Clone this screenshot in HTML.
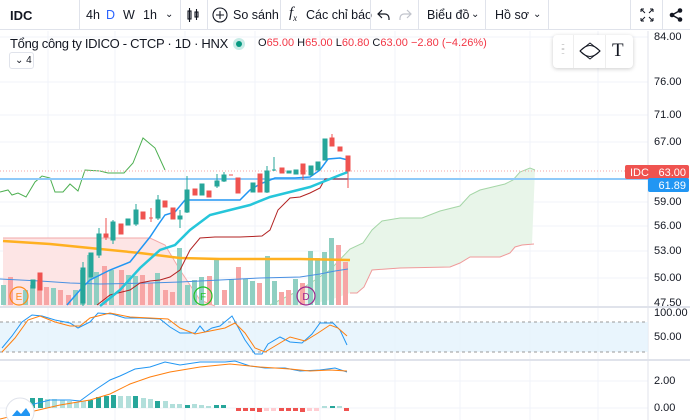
<!DOCTYPE html>
<html><head><meta charset="utf-8"><style>
*{margin:0;padding:0;box-sizing:border-box}
body{width:690px;height:420px;overflow:hidden;background:#fff;font-family:"Liberation Sans","Noto Sans CJK SC",sans-serif;color:#131722;position:relative}
.tb{position:absolute;left:0;top:0;width:690px;height:30px;border-bottom:1px solid #e0e3eb;font-size:12.5px}
.tb span{position:absolute;top:8px;white-space:nowrap}
.sep{position:absolute;top:0;width:1px;height:30px;background:#e0e3eb}
.ax{position:absolute;left:654px;font-size:11px;color:#131722}
</style></head><body>
<div class="tb">
<span style="left:10px;font-weight:bold;font-size:13px">IDC</span>
<div class="sep" style="left:79px"></div>
<span style="left:86px">4h</span><span style="left:106px;color:#2962ff">D</span><span style="left:123px">W</span><span style="left:143px">1h</span><span style="left:165px;font-size:10px;top:9px">⌄</span>
<div class="sep" style="left:180px"></div>
<svg style="position:absolute;left:185px;top:7px" width="16" height="16" viewBox="0 0 16 16" fill="none" stroke="#131722" stroke-width="1.1"><rect x="3" y="4" width="3" height="8"/><line x1="4.5" y1="1" x2="4.5" y2="15"/><rect x="10" y="5" width="3" height="5"/><line x1="11.5" y1="2" x2="11.5" y2="13"/></svg>
<div class="sep" style="left:207px"></div>
<svg style="position:absolute;left:212px;top:7px" width="16" height="16" viewBox="0 0 16 16" fill="none" stroke="#131722" stroke-width="1.1"><circle cx="8" cy="8" r="7"/><path d="M8 4v8M4 8h8"/></svg>
<span style="left:233px">So sánh</span>
<div class="sep" style="left:280px"></div>
<span style="left:289px;font-family:'Liberation Serif',serif;font-style:italic;font-size:15px;top:5px">f<sub style="font-size:9px">x</sub></span>
<span style="left:306px">Các chỉ báo</span>
<div class="sep" style="left:370px"></div>
<svg style="position:absolute;left:377px;top:9px" width="14" height="12" viewBox="0 0 14 12" fill="none" stroke="#131722" stroke-width="1.2"><path d="M5 1L1 5l4 4M1 5h7a4 4 0 0 1 4 4v2"/></svg>
<svg style="position:absolute;left:398px;top:9px" width="14" height="12" viewBox="0 0 14 12" fill="none" stroke="#c0c3cc" stroke-width="1.2"><path d="M9 1l4 4-4 4M13 5H6a4 4 0 0 0-4 4v2"/></svg>
<div class="sep" style="left:418px"></div>
<span style="left:427px">Biểu đồ</span><span style="left:471px;font-size:10px;top:9px">⌄</span>
<div class="sep" style="left:485px"></div>
<span style="left:495px">Hồ sơ</span><span style="left:533px;font-size:10px;top:9px">⌄</span>
<div class="sep" style="left:548px"></div>
<div class="sep" style="left:630px"></div>
<svg style="position:absolute;left:640px;top:8px" width="14" height="14" viewBox="0 0 14 14" fill="none" stroke="#131722" stroke-width="1"><path d="M1 1l4 4M1 1h3M1 1v3M13 1l-4 4M13 1h-3M13 1v3M1 13l4-4M1 13h3M1 13v-3M13 13l-4-4M13 13h-3M13 13v-3"/></svg>
<div class="sep" style="left:662px"></div>
<svg style="position:absolute;left:669px;top:8px" width="14" height="14" viewBox="0 0 14 14" fill="#131722"><circle cx="11" cy="2.5" r="2.3"/><circle cx="3" cy="7" r="2.3"/><circle cx="11" cy="11.5" r="2.3"/><path d="M3 7L11 2.5M3 7l8 4.5" stroke="#131722" stroke-width="1.4"/></svg>
</div>

<svg style="position:absolute;left:0;top:31px" width="690" height="389" viewBox="0 31 690 389">
<g stroke="#f0f3fa" stroke-width="1">
<path d="M48 31V420M115 31V420M185 31V420M255 31V420M320 31V420M395 31V420M460 31V420M530 31V420M598 31V420"/>
<path d="M0 82H648M0 115H648M0 142H648M0 202H648M0 226H648M0 251H648M0 278H648M0 37H648M0 381H648M0 408H648"/>
</g>
<line x1="648" y1="31" x2="648" y2="420" stroke="#e0e3eb"/>
<line x1="0" y1="307" x2="690" y2="307" stroke="#e0e3eb" stroke-width="2"/>
<line x1="0" y1="360" x2="690" y2="360" stroke="#e0e3eb" stroke-width="2"/>
<path d="M3 238L150 238L165 245L180 270L200 300L215 306L3 306Z" fill="#fde5e5"/>
<path d="M3 238L150 238L165 245L180 270L200 300L215 306" fill="none" stroke="#f2a8a8"/>
<path d="M270 305L300 290L330 270L350 249L363 243L372 230L382 221L400 218L422 218L440 211L460 206L470 195L480 190L505 184L513 180L520 172L530 168L535 170L532 244L522 245L515 247L510 253L500 257L470 257L460 263L450 267L400 268L372 270L364 287L357 293L350 293L330 300L300 306Z" fill="#e8f5e9"/>
<path d="M270 305L300 290L330 270L350 249L363 243L372 230L382 221L400 218L422 218L440 211L460 206L470 195L480 190L505 184L513 180L520 172L530 168L535 170" fill="none" stroke="#a5d6a7"/>
<path d="M350 293L357 293L364 287L372 270L400 268L450 267L460 263L470 257L500 257L510 253L515 247L522 245L534 244" fill="none" stroke="#ef9a9a"/>
<g fill="#f7a5a5">
<rect x="8" y="277" width="5" height="28"/><rect x="37" y="280" width="5" height="25"/><rect x="44" y="287" width="5" height="18"/><rect x="58" y="290" width="5" height="15"/><rect x="66" y="295" width="5" height="10"/><rect x="102" y="266" width="5" height="39"/><rect x="119" y="270" width="5" height="35"/><rect x="140" y="275" width="5" height="30"/><rect x="148" y="283" width="5" height="22"/><rect x="163" y="290" width="5" height="15"/><rect x="170" y="292" width="5" height="13"/><rect x="207" y="276" width="5" height="29"/><rect x="222" y="290" width="5" height="15"/><rect x="236" y="267" width="5" height="38"/><rect x="257" y="283" width="5" height="22"/><rect x="279" y="292" width="5" height="13"/><rect x="286" y="290" width="5" height="15"/><rect x="300" y="283" width="5" height="22"/><rect x="336" y="245" width="5" height="60"/><rect x="343" y="262" width="5" height="43"/></g>
<g fill="#8fcfc2">
<rect x="1" y="285" width="5" height="20"/><rect x="23" y="290" width="5" height="15"/><rect x="30" y="285" width="5" height="20"/><rect x="51" y="288" width="5" height="17"/><rect x="73" y="290" width="5" height="15"/><rect x="80" y="270" width="5" height="35"/><rect x="87" y="255" width="5" height="50"/><rect x="94" y="272" width="5" height="33"/><rect x="109" y="270" width="5" height="35"/><rect x="126" y="275" width="5" height="30"/><rect x="133" y="276" width="5" height="29"/><rect x="155" y="273" width="5" height="32"/><rect x="177" y="248" width="5" height="57"/><rect x="185" y="285" width="5" height="20"/><rect x="192" y="280" width="5" height="25"/><rect x="199" y="277" width="5" height="28"/><rect x="214" y="258" width="5" height="47"/><rect x="229" y="279" width="5" height="26"/><rect x="243" y="279" width="5" height="26"/><rect x="250" y="281" width="5" height="24"/><rect x="265" y="256" width="5" height="49"/><rect x="272" y="281" width="5" height="24"/><rect x="293" y="279" width="5" height="26"/><rect x="308" y="251" width="5" height="54"/><rect x="315" y="258" width="5" height="47"/><rect x="322" y="252" width="5" height="53"/><rect x="329" y="238" width="5" height="67"/></g>
<path d="M0 279L40 281L70 283L100 284L150 283L180 282L220 280L260 278L300 277L320 274L335 271L348 269" fill="none" stroke="#4a90e2" stroke-width="1"/>
<path d="M3 241L50 244L100 249L140 253L180 258L220 259L300 259L350 260" fill="none" stroke="#ffb020" stroke-width="2.5"/>
<path d="M0 192L8 190L12 195L18 193L26 197L35 182L42 176L50 178L55 192L63 192L70 184L78 191L85 170L100 171L108 173L124 173L133 163L143 138L155 148L165 170" fill="none" stroke="#4caf50" stroke-width="1"/>
<line x1="0" y1="171" x2="648" y2="171" stroke="#f7a5a5" stroke-dasharray="1,2"/>
<line x1="0" y1="179" x2="648" y2="179" stroke="#90caf9" stroke-width="2"/>
<path d="M97 305L110 295L130 290L140 283L150 281L160 280L170 277L180 270L190 250L200 238L215 237L240 237L262 236L270 230L278 210L290 198L300 197L310 193L320 188L325 179L348 179" fill="none" stroke="#b22222" stroke-width="1"/>
<path d="M100 306L120 290L140 268L160 250L175 245L190 230L210 215L230 210L250 205L270 197L290 192L310 187L325 181L340 175L348 172" fill="none" stroke="#26c6da" stroke-width="2.5"/>
<path d="M67 305L80 290L90 280L100 275L110 270L130 262L150 237L158 225L165 215L175 212L185 200L220 200L240 200L250 190L260 184L275 178L295 178L310 177L320 170L328 159L340 158L348 160" fill="none" stroke="#2196f3" stroke-width="1.5"/>
<g stroke="#26a69a" fill="#26a69a">
<rect x="31" y="280" width="4" height="8"/><rect x="81" y="268" width="4" height="35"/><line x1="83" y1="262" x2="83" y2="306"/><rect x="89" y="253" width="4" height="24"/><rect x="97" y="234" width="4" height="21"/><line x1="99" y1="228" x2="99" y2="258"/><rect x="111" y="222" width="4" height="18"/><line x1="113" y1="220" x2="113" y2="244"/><rect x="126" y="219" width="4" height="6"/><rect x="134" y="210" width="4" height="14"/><line x1="136" y1="204" x2="136" y2="226"/><rect x="156" y="200" width="4" height="18"/><line x1="158" y1="195" x2="158" y2="220"/><rect x="178" y="216" width="4" height="3"/><line x1="180" y1="210" x2="180" y2="228"/><rect x="185" y="190" width="4" height="22"/><line x1="187" y1="176" x2="187" y2="213"/><rect x="200" y="184" width="4" height="11"/><rect x="215" y="181" width="4" height="5"/><line x1="217" y1="174" x2="217" y2="188"/><rect x="222" y="175" width="4" height="6"/><line x1="224" y1="172" x2="224" y2="182"/><rect x="251" y="183" width="4" height="9"/><rect x="265" y="171" width="4" height="21"/><line x1="267" y1="166" x2="267" y2="193"/><line x1="272" y1="170" x2="276" y2="170"/><line x1="274" y1="157" x2="274" y2="171"/><rect x="287" y="171" width="4" height="2"/><rect x="294" y="170" width="4" height="4"/><rect x="309" y="166" width="4" height="9"/><rect x="316" y="162" width="4" height="8"/><rect x="323" y="139" width="4" height="21"/></g>
<g stroke="#ef5350" fill="#ef5350">
<rect x="38" y="273" width="4" height="17"/><rect x="104" y="234" width="4" height="3"/><line x1="106" y1="218" x2="106" y2="240"/><rect x="119" y="224" width="4" height="10"/><rect x="141" y="212" width="4" height="7"/><line x1="149" y1="218" x2="153" y2="218"/><line x1="151" y1="208" x2="151" y2="222"/><rect x="163" y="201" width="4" height="6"/><rect x="171" y="208" width="4" height="11"/><rect x="193" y="189" width="4" height="6"/><rect x="207" y="191" width="4" height="6"/><line x1="229" y1="175" x2="233" y2="175"/><rect x="236" y="178" width="4" height="15"/><rect x="258" y="174" width="4" height="18"/><rect x="280" y="168" width="4" height="5"/><rect x="301" y="164" width="4" height="10"/><line x1="303" y1="164" x2="303" y2="180"/><rect x="330" y="138" width="4" height="8"/><line x1="332" y1="134" x2="332" y2="146"/><rect x="338" y="147" width="4" height="4"/><rect x="346" y="156" width="4" height="15"/><line x1="348" y1="156" x2="348" y2="188"/></g>
<circle cx="19" cy="296" r="9" fill="none" stroke="#ff8c1a" stroke-width="1.2"/><text x="19" y="300" font-size="10" fill="#ff8c1a" text-anchor="middle">E</text>
<circle cx="203" cy="296" r="9" fill="none" stroke="#22c322" stroke-width="1.2"/><text x="203" y="300" font-size="10" fill="#22c322" text-anchor="middle">F</text>
<circle cx="306" cy="296" r="9" fill="none" stroke="#9c278f" stroke-width="1.2"/><text x="306" y="300" font-size="10" fill="#9c278f" text-anchor="middle">D</text>
<rect x="0" y="322" width="648" height="30" fill="#e3f2fd" opacity="0.8"/>
<path d="M0 322H648M0 352H648" stroke="#999" stroke-dasharray="3,3"/>
<path d="M2 348L12 336L22 322L32 315L42 316L55 320L70 323L78 328L90 322L98 313L112 314L125 318L140 318L160 319L170 327L180 333L195 333L200 326L205 332L212 328L220 326L232 316L245 340L255 354L262 354L268 344L280 337L290 342L302 343L312 334L320 323L333 323L340 330L347 345" fill="none" stroke="#2196f3" stroke-width="1"/>
<path d="M2 352L15 338L28 320L40 316L55 322L70 326L80 326L90 318L110 313L130 317L150 318L168 319L180 328L195 334L210 331L225 328L235 323L245 333L255 348L265 352L275 346L290 337L305 341L318 333L330 325L338 328L347 336" fill="none" stroke="#ff7f0e" stroke-width="1"/>
<g fill="#26a69a"><rect x="30" y="398" width="5" height="10"/><rect x="38" y="398" width="5" height="10"/><rect x="88" y="400" width="5" height="8"/><rect x="96" y="397" width="5" height="11"/><rect x="104" y="396" width="5" height="12"/><rect x="111" y="395" width="5" height="13"/><rect x="133" y="396" width="5" height="12"/><rect x="155" y="401" width="5" height="7"/><rect x="185" y="405" width="5" height="3"/><rect x="214" y="405" width="5" height="3"/><rect x="221" y="405" width="5" height="3"/><rect x="330" y="406" width="5" height="2"/></g>
<g fill="#b2dfdb"><rect x="45" y="399" width="5" height="9"/><rect x="52" y="399" width="5" height="9"/><rect x="60" y="400" width="5" height="8"/><rect x="67" y="401" width="5" height="7"/><rect x="74" y="402" width="5" height="6"/><rect x="81" y="401" width="5" height="7"/><rect x="118" y="396" width="5" height="12"/><rect x="126" y="396" width="5" height="12"/><rect x="141" y="398" width="5" height="10"/><rect x="148" y="399" width="5" height="9"/><rect x="163" y="401" width="5" height="7"/><rect x="170" y="404" width="5" height="4"/><rect x="177" y="404" width="5" height="4"/><rect x="192" y="404" width="5" height="4"/><rect x="199" y="405" width="5" height="3"/><rect x="206" y="406" width="5" height="2"/><rect x="322" y="406" width="5" height="2"/><rect x="337" y="406" width="5" height="2"/></g>
<g fill="#ef5350"><rect x="236" y="408" width="5" height="3"/><rect x="243" y="408" width="5" height="3"/><rect x="250" y="408" width="5" height="3"/><rect x="257" y="408" width="5" height="4"/><rect x="279" y="408" width="5" height="3"/><rect x="286" y="408" width="5" height="3"/><rect x="293" y="408" width="5" height="3"/><rect x="300" y="408" width="5" height="4"/><rect x="344" y="408" width="5" height="3"/></g>
<g fill="#ffcdd2"><rect x="264" y="408" width="5" height="3"/><rect x="271" y="408" width="5" height="3"/><rect x="307" y="408" width="5" height="3"/><rect x="314" y="408" width="5" height="3"/></g>
<path d="M30 405L50 400L70 400L80 401L95 390L110 380L120 376L135 369L150 367L165 362L180 365L200 362L225 362L235 361L250 366L265 368L285 368L300 371L320 370L335 368L347 372" fill="none" stroke="#2196f3" stroke-width="1"/>
<path d="M0 419L30 412L60 405L90 400L110 394L130 384L150 377L170 372L200 367L230 364L260 367L290 369L310 371L330 370L347 371" fill="none" stroke="#ff7f0e" stroke-width="1"/>
<rect x="625" y="165" width="64" height="14" rx="2" fill="#ef5350"/><text x="630" y="176" font-size="11" fill="#fff">IDC</text><text x="686" y="176" font-size="11" fill="#fff" text-anchor="end">63.00</text>
<rect x="648" y="178" width="41" height="14" rx="2" fill="#2196f3"/><text x="686" y="189" font-size="11" fill="#fff" text-anchor="end">61.89</text>
<circle cx="20" cy="412" r="14" fill="#fff" stroke="#e0e3eb"/><path d="M12 416l5-6 4 4 5-6 4 6v2h-18z" fill="#2196f3"/>
</svg>
<div class="ax" style="top:31px">84.00</div><div class="ax" style="top:76px">76.00</div><div class="ax" style="top:109px">71.00</div><div class="ax" style="top:136px">67.00</div><div class="ax" style="top:196px">59.00</div><div class="ax" style="top:220px">56.00</div><div class="ax" style="top:245px">53.00</div><div class="ax" style="top:272px">50.00</div><div class="ax" style="top:297px">47.50</div><div class="ax" style="top:307px">100.00</div><div class="ax" style="top:331px">50.00</div><div class="ax" style="top:375px">2.00</div><div class="ax" style="top:402px">0.00</div>

<div style="position:absolute;left:10px;top:36px;font-size:13px;letter-spacing:-0.3px;white-space:nowrap">Tổng công ty IDICO - CTCP · 1D · HNX</div>
<div style="position:absolute;left:233px;top:38px;width:12px;height:12px;border-radius:50%;background:#c8ebe6"></div>
<div style="position:absolute;left:236px;top:41px;width:6px;height:6px;border-radius:50%;background:#089981"></div>
<div style="position:absolute;left:258px;top:37px;font-size:11px;white-space:nowrap;color:#f23645"><span style="color:#131722">O</span>65.00 <span style="color:#131722">H</span>65.00 <span style="color:#131722">L</span>60.80 <span style="color:#131722">C</span>63.00 −2.80 (−4.26%)</div>
<div style="position:absolute;left:9px;top:52px;width:25px;height:17px;border:1px solid #e0e3eb;border-radius:3px;font-size:10px;padding:2px 0 0 5px">⌄ 4</div>
<div style="position:absolute;left:553px;top:35px;width:80px;height:33px;background:#fff;border-radius:4px;box-shadow:0 1px 4px rgba(0,0,0,.2)">
<div style="position:absolute;left:8px;top:9px;font-size:9px;color:#bbb;letter-spacing:-1px;line-height:5px">::<br>::</div>
<div style="position:absolute;left:20px;top:0;width:1px;height:33px;background:#eee"></div>
<svg style="position:absolute;left:24px;top:6px" width="26" height="20" viewBox="0 0 26 20" fill="none" stroke="#131722" stroke-width="1"><path d="M13 2L23 10L13 18L3 10Z" stroke-linejoin="round"/><path d="M3 10Q13 -1 23 10Q13 21 3 10"/></svg>
<div style="position:absolute;left:52px;top:0;width:1px;height:33px;background:#eee"></div>
<div style="position:absolute;left:59px;top:5px;font-family:'Liberation Serif',serif;font-size:19px">T</div>
</div>
</body></html>
